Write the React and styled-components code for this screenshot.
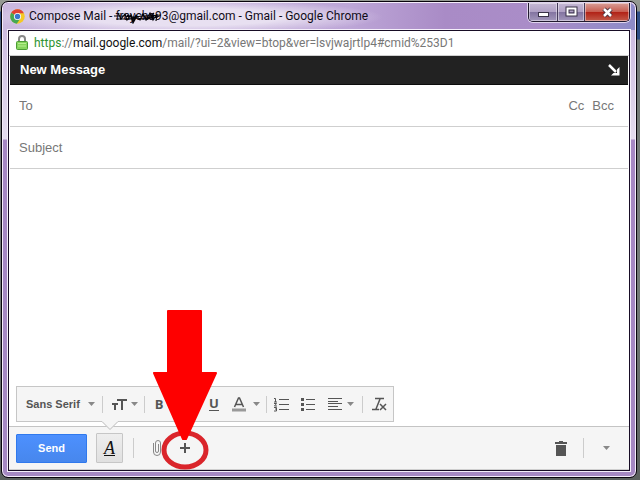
import React from "react";
import styled, { createGlobalStyle, css } from "styled-components";

const Global = createGlobalStyle`
  * { box-sizing: border-box; }
  body { margin: 0; background: #747a78; font-family: "Liberation Sans", Arial, sans-serif; }
  button, input, textarea, select { font: inherit; border: 0; padding: 0; margin: 0; background: none; color: inherit; outline: 0; }
  button { cursor: pointer; }
`;

const Desktop = styled.div`
  min-height: 100vh;
  padding: 1px 3px 2px 1px;
  display: flex;
  background: linear-gradient(#969b93 0, #8b918a 11px, #2f4f86 12px, #2f4f86 39px, #737a77 40px, #737a77 60%, #5a605e 100%);
`;

const Frame = styled.main`
  flex: 1;
  min-width: 0;
  display: flex;
  flex-direction: column;
  border: 1px solid #08040c;
  border-radius: 7px;
  padding: 0 6px 6px;
  box-shadow: inset 0 0 0 1px #f4ecfa;
  background: linear-gradient(#baa0d2 0, #cdbce0 30px, #e4dcef 137px, #a688c4 138px, #a588c3 100%);
`;

const TitleBar = styled.header`
  height: 27px;
  margin: 1px -5px 0;
  padding-left: 7px;
  display: flex;
  align-items: flex-start;
  border-radius: 6px 6px 0 0;
  background:
    radial-gradient(ellipse 250px 22px at 180px 14px, #e8e0f1 40%, #e8e0f100 80%),
    linear-gradient(90deg, #cbb9df, #bda6d7 55%, #a98bc6 70%, #aa8dc8 85%, #8d8bc8);
`;

const Title = styled.h1`
  margin: 0 0 0 4px;
  flex: 1;
  min-width: 0;
  font: 400 12px/27px Roboto, "Open Sans", sans-serif;
  color: #100c18;
  white-space: nowrap;
`;

const ChromeLogo = styled.svg`
  width: 15px;
  height: 15px;
  margin-top: 6px;
  flex: none;
`;

const Redacted = styled.span`
  position: relative;
  display: inline-block;
`;

const Scribble = styled.svg`
  position: absolute;
  left: -2px;
  top: 5px;
  width: 50px;
  height: 16px;
`;

const Controls = styled.div`
  display: flex;
  margin-right: 5px;
  border: 1px solid #221b30;
  border-top: 0;
  border-radius: 0 0 5px 5px;
  overflow: hidden;
  box-shadow: 0 0 0 1px #dfd4ed;
`;

const Control = styled.button`
  width: ${(p) => p.$w}px;
  height: 18px;
  display: grid;
  place-items: center;
  box-shadow: inset 0 0 0 1px #ffffff70;
  background: linear-gradient(#c5b8d4 0, #afa0c4 49%, #8273a0 50%, #a397bb);
  & + & { border-left: 1px solid #453a5a; }
  ${(p) => p.$close && css`background: linear-gradient(#d99e98 0, #c75d50 49%, #b12015 50%, #c35b49);`}
`;

const Client = styled.section`
  flex: 1;
  display: flex;
  flex-direction: column;
  border: 1px solid #170c25;
  outline: 1px solid #f5effb;
  background: #fff;
`;

const AddressBar = styled.div`
  height: 25px;
  padding-left: 7px;
  display: flex;
  align-items: center;
  gap: 6px;
  border-bottom: 1px solid #cfcfcf;
  font: 400 12px/24px Roboto, "Open Sans", sans-serif;
  color: #777;
  white-space: nowrap;
`;
const Secure = styled.span`color: #2d9431;`;
const Host = styled.span`color: #111;`;

const MessageHeader = styled.div`
  height: 29px;
  margin: 0 1px;
  padding: 0 8px 0 10px;
  display: flex;
  justify-content: space-between;
  align-items: center;
  background: #222;
  border-bottom: 1px solid #0c0c0c;
  color: #fff;
`;
const Heading = styled.h2`
  margin: 0;
  font-size: 13px;
  line-height: 28px;
`;

const IconButton = styled.button`
  display: grid;
  place-items: center;
  width: ${(p) => p.$w || 20}px;
  height: 28px;
  flex: none;
  color: #555;
`;

const Field = styled.div`
  height: 42px;
  margin: 0 1px;
  padding: 0 14px 0 9px;
  display: flex;
  align-items: center;
  gap: 8px;
  border-bottom: 1px solid #cfcfcf;
  font-size: 13px;
  color: #777;
`;
const TextInput = styled.input`
  flex: 1;
  min-width: 0;
  height: 30px;
  &::placeholder { color: #777; opacity: 1; }
`;
const TextButton = styled.button`color: #777;`;

const Body = styled.textarea`
  flex: 1;
  min-height: 120px;
  margin: 0 1px;
  padding: 10px;
  resize: none;
`;

const FormatRow = styled.div`
  padding: 0 7px 4px;
  display: flex;
`;
const FormatBar = styled.div`
  position: relative;
  width: 378px;
  height: 36px;
  padding-left: 9px;
  display: flex;
  align-items: center;
  border: 1px solid #c6c6c6;
  background: #f5f5f5;
  color: #555;
`;
const Pointer = styled.svg`
  position: absolute;
  left: 84px;
  top: 34px;
  width: 18px;
  height: 10px;
  z-index: 1;
`;
const FontButton = styled.button`
  width: 69px;
  height: 28px;
  flex: none;
  display: flex;
  align-items: center;
  justify-content: space-between;
  font-size: 11px;
  font-weight: 700;
  white-space: nowrap;
`;
const Divider = styled.span`
  width: 1px;
  height: ${(p) => p.$h || 17}px;
  margin: 0 ${(p) => p.$gap || 7}px;
  background: #ccc;
  flex: none;
`;
const Glyph = styled.span`
  font: 700 13px/16px "Open Sans", sans-serif;
  ${(p) => p.$italic && css`font-style: italic;`}
  ${(p) => p.$underline && css`border-bottom: 1px solid #555; line-height: 13px;`}
`;

const Footer = styled.footer`
  height: 44px;
  padding: 0 13px 0 7px;
  display: flex;
  align-items: center;
  border-top: 1px solid #c4c4c4;
  border-bottom: 1px solid #cfcfcf;
  background: #f5f5f5;
`;
const Send = styled.button`
  width: 71px;
  height: 29px;
  border: 1px solid #3079ed;
  border-radius: 1px;
  background: linear-gradient(#4d90fe, #4787ed);
  color: #fff;
  font-size: 11px;
  font-weight: 700;
`;
const FormatToggle = styled.button`
  width: 27px;
  height: 30px;
  margin-left: 9px;
  display: grid;
  place-items: center;
  border: 1px solid #c6c6c6;
  border-radius: 1px;
  background: linear-gradient(#eee, #e0e0e0);
  color: #111;
`;
const ToggleLetter = styled.span`
  font: italic 400 18px/14px "Liberation Serif", serif;
  border-bottom: 1px solid #111;
`;
const Highlighted = styled.div`
  position: relative;
  display: flex;
  margin-left: 5px;
`;
const Annotation = styled.svg`
  position: absolute;
  left: -23px;
  bottom: -10px;
  width: 66px;
  height: 162px;
  pointer-events: none;
  z-index: 2;
`;
const Spacer = styled.span`flex: 1;`;

const Caret = ({ color = "#888" }) => (
  <svg width="7" height="4" aria-hidden="true"><path d="M0 0h7L3.5 4z" fill={color} /></svg>
);

const Icon = ({ children, w = 16, h = 16 }) => (
  <svg width={w} height={h} viewBox={`0 0 ${w} ${h}`} fill="none" stroke="currentColor" aria-hidden="true">{children}</svg>
);

function WindowTitle() {
  return (
    <TitleBar>
      <ChromeLogo viewBox="0 0 16 16" aria-hidden="true">
        <circle cx="8" cy="8" r="7.7" fill="#f4c925" />
        <path d="M8 8 1.3 4.1A7.7 7.7 0 0 1 14.8 4.4H8z" fill="#df4335" />
        <path d="M8 8 1.3 4.1A7.7 7.7 0 0 0 7.2 15.7L11 10z" fill="#45a853" />
        <circle cx="8" cy="8" r="3.8" fill="#fff" />
        <circle cx="8" cy="8" r="2.9" fill="#3978cf" />
      </ChromeLogo>
      <Title>
        Compose Mail -{" "}
        <Redacted>
          fraycha93
          <Scribble viewBox="0 0 50 16" fill="none" stroke="#050308" strokeWidth="1.2" aria-hidden="true">
            <path d="M1 8h11l9 1 9-1 18-1M3 11h10l10-1 10 1 12-2M5 5l3 6 4-5 2 6 4-5 2 6 3-6 4 5 3-6 3 6 4-7 3 7 4-6-1 7M18 9l2 6 4-7M29 6l5 5 7-6M14 7l8 3M33 12l8-4" />
          </Scribble>
        </Redacted>
        @gmail.com - Gmail - Google Chrome
      </Title>
      <Controls>
        <Control $w={28} aria-label="Minimize">
          <Icon w={13} h={12}><rect x="1.5" y="6.5" width="10" height="4" fill="#fff" stroke="#3a3248" /></Icon>
        </Control>
        <Control $w={27} aria-label="Maximize">
          <Icon w={13} h={12}>
            <rect x="2.5" y="2.5" width="8" height="6" stroke="#3a3248" strokeWidth="4" />
            <rect x="2.5" y="2.5" width="8" height="6" stroke="#fff" strokeWidth="2" />
          </Icon>
        </Control>
        <Control $w={45} $close aria-label="Close">
          <Icon w={13} h={11}>
            <path d="m3 2 7 7m0-7L3 9" stroke="#493240" strokeWidth="4.5" />
            <path d="m3 2 7 7m0-7L3 9" stroke="#fff" strokeWidth="2.5" />
          </Icon>
        </Control>
      </Controls>
    </TitleBar>
  );
}

function FormattingTools() {
  return (
    <FormatRow>
      <FormatBar role="toolbar" aria-label="Formatting">
        <FontButton>Sans Serif <Caret /></FontButton>
        <Divider />
        <IconButton $w={18} aria-label="Size">
          <Icon w={15} h={13}><path d="M5 2h10M10 2v10M0 6h6M3 6v6" strokeWidth="2" /></Icon>
        </IconButton>
        <IconButton $w={12} aria-label="Choose size"><Caret /></IconButton>
        <Divider $gap={4} />
        <IconButton aria-label="Bold"><Glyph>B</Glyph></IconButton>
        <IconButton $w={34} aria-label="Italic"><Glyph $italic>I</Glyph></IconButton>
        <IconButton $w={22} aria-label="Underline"><Glyph $underline>U</Glyph></IconButton>
        <IconButton $w={28} aria-label="Text color">
          <Icon w={14} h={15}>
            <path d="m2.500 10 4-9h1l4 9M4 7.500h6" strokeWidth="1.500" />
            <path d="M0 13h14" stroke="#999" strokeWidth="3" />
          </Icon>
        </IconButton>
        <IconButton $w={7} aria-label="Choose color"><Caret /></IconButton>
        <Divider $gap={6} />
        <IconButton $w={16} aria-label="Numbered list">
          <Icon w={15} h={15}>
            <path d="M5 2.500h10M5 7.500h10M5 12.500h10" />
            <path d="M0 1.500h1.500V5M0 5h3M0 6.500h2.500L.5 9H3M0 10.500h2.500v3.500H0m1-2h1.500" />
          </Icon>
        </IconButton>
        <IconButton $w={38} aria-label="Bulleted list">
          <Icon w={14} h={13}>
            <path d="M5 1.500h9M5 6.500h9M5 11.500h9" />
            <path d="M0 1.500h3M0 6.500h3M0 11.500h3" strokeWidth="3" />
          </Icon>
        </IconButton>
        <IconButton $w={16} aria-label="Align">
          <Icon w={14} h={12}><path d="M0 .5h14M0 3.500h10M0 5.500h14M0 8.500h10M0 11.500h14" /></Icon>
        </IconButton>
        <IconButton $w={15} aria-label="Choose alignment"><Caret /></IconButton>
        <Divider $gap={4} />
        <IconButton $w={24} aria-label="Remove formatting">
          <Icon w={15} h={14}><path d="M3 1.500h9M8 2 4 12M0 12.500h7M8 7l6 6m0-6-6 6" strokeWidth="1.500" /></Icon>
        </IconButton>
        <Pointer viewBox="0 0 18 10" aria-hidden="true">
          <path d="M1 0h16v1L9 9 1 1z" fill="#f5f5f5" />
          <path d="m1 .5 8 8 8-8" fill="none" stroke="#bbb" />
        </Pointer>
      </FormatBar>
    </FormatRow>
  );
}

export default function App() {
  return (
    <>
      <Global />
      <Desktop>
        <Frame>
          <WindowTitle />
          <Client>
            <AddressBar>
              <svg width="12" height="16" viewBox="0 0 12 16" aria-hidden="true">
                <path d="M3 8V4a3 3 0 0 1 6 0v4" fill="none" stroke="#888" strokeWidth="2" />
                <rect x=".5" y="6.500" width="11" height="8" rx="1" fill="#86d55d" stroke="#4c9c35" />
                <path d="M2 8.500h8M2 11h8" stroke="#b8ed91" />
              </svg>
              <span><Secure>https</Secure>://<Host>mail.google.com</Host>/mail/?ui=2&amp;view=btop&amp;ver=lsvjwajrtlp4#cmid%253D1</span>
            </AddressBar>
            <MessageHeader>
              <Heading>New Message</Heading>
              <svg width="12" height="12" viewBox="0 0 12 12" aria-hidden="true">
                <path d="m1 1 7 7" stroke="#fff" strokeWidth="2.5" />
                <path d="M11.500 3v8.500H3L5.500 9h3.500V5.500z" fill="#fff" />
              </svg>
            </MessageHeader>
            <Field>
              <TextInput aria-label="To" placeholder="To" />
              <TextButton>Cc</TextButton>
              <TextButton>Bcc</TextButton>
            </Field>
            <Field><TextInput aria-label="Subject" placeholder="Subject" /></Field>
            <Body aria-label="Message body" />
            <FormattingTools />
            <Footer>
              <Send>Send</Send>
              <FormatToggle aria-label="Formatting options"><ToggleLetter>A</ToggleLetter></FormatToggle>
              <Divider $h={20} $gap={10} />
              <IconButton $w={26} aria-label="Attach files">
                <Icon w={10} h={18}><path d="M1.500 4v9a3.500 3.500 0 0 0 7 0V4a2.500 2.500 0 0 0-5 0v8a1.500 1.500 0 0 0 3 0V5" stroke="#888" /></Icon>
              </IconButton>
              <Highlighted>
                <IconButton aria-label="Insert more">
                  <Icon w={10} h={10}><path d="M5 0v10M0 5h10" strokeWidth="2" /></Icon>
                </IconButton>
                <Annotation viewBox="0 0 66 162" aria-hidden="true">
                  <ellipse cx="33" cy="140" rx="21" ry="17" fill="none" stroke="#da252b" strokeWidth="5" />
                  <path d="M16 1h33v62h15L34 129h-3L2 63h14z" fill="#fe0000" stroke="#fe0000" strokeWidth="2" strokeLinejoin="round" />
                </Annotation>
              </Highlighted>
              <Spacer />
              <IconButton aria-label="Discard draft">
                <Icon w={12} h={16}><path d="M1 5h10v11H1zM0 2h12v2H0zM4 1h4v1H4z" fill="currentColor" stroke="none" /></Icon>
              </IconButton>
              <Divider $h={20} $gap={12} />
              <IconButton aria-label="More options"><Caret /></IconButton>
            </Footer>
          </Client>
        </Frame>
      </Desktop>
    </>
  );
}
